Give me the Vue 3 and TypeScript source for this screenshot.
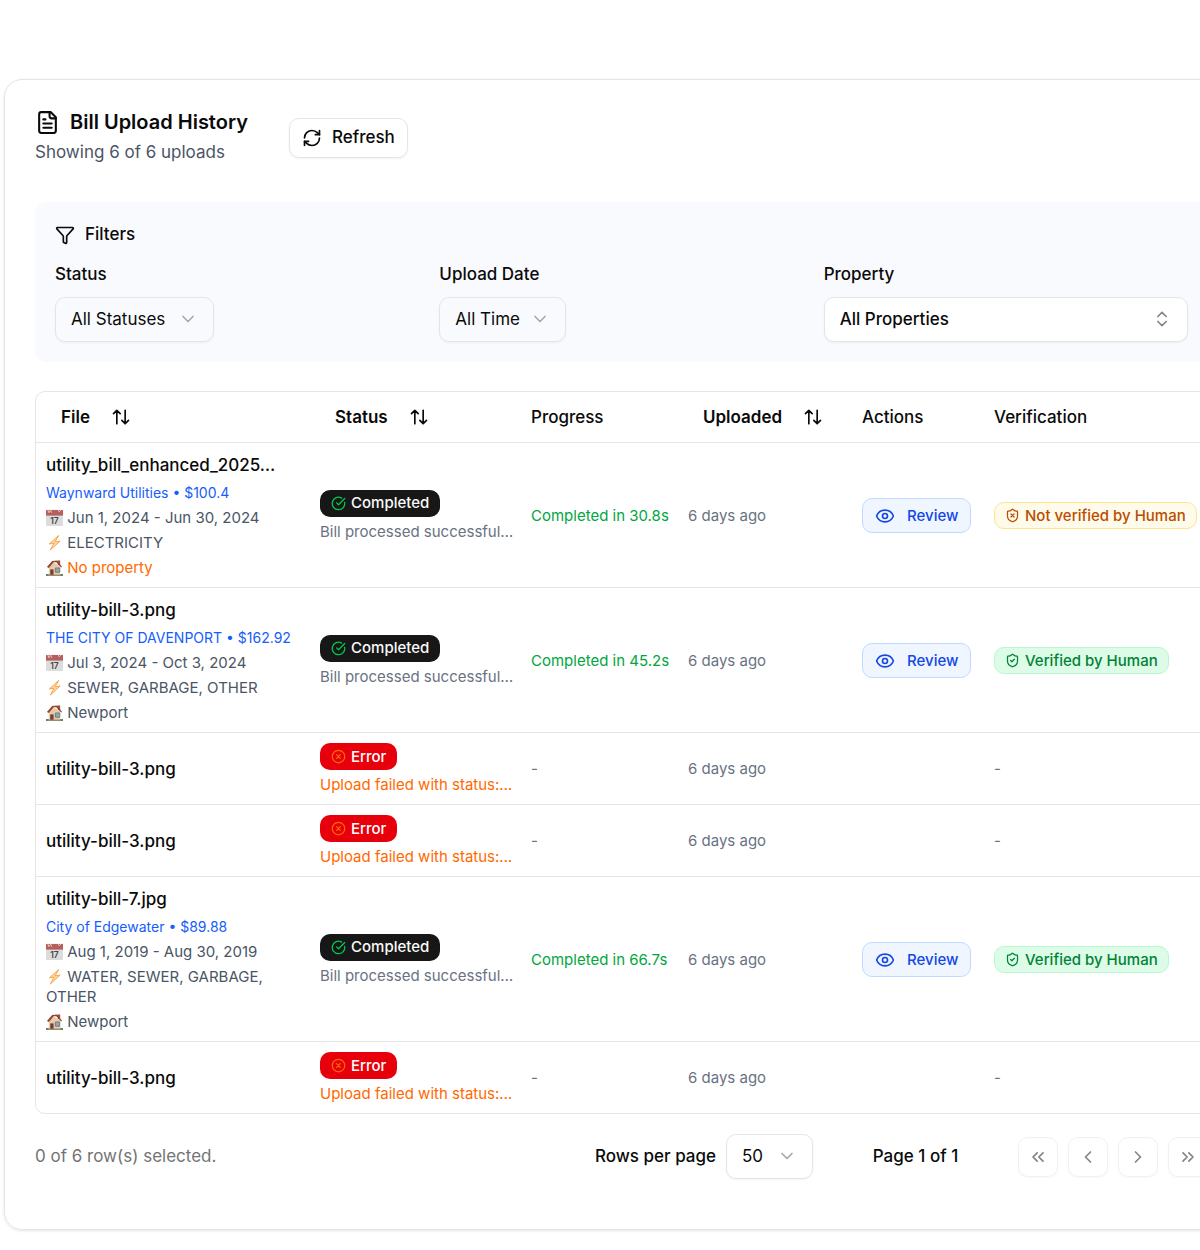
<script setup lang="ts">
import { ref } from 'vue'

type Verification = 'verified' | 'unverified' | null

interface Upload {
  id: number
  file: string
  bill?: string
  period?: string
  services?: string
  property?: string
  ok: boolean
  message: string
  progress: string
  uploaded: string
  verification: Verification
}

const success = 'Bill processed successful…'
const failure = 'Upload failed with status:…'

const failed = (id: number): Upload => ({
  id,
  file: 'utility-bill-3.png',
  ok: false,
  message: failure,
  progress: '-',
  uploaded: '6 days ago',
  verification: null,
})

const uploads: Upload[] = [
  {
    id: 1,
    file: 'utility_bill_enhanced_2025…',
    bill: 'Waynward Utilities • $100.4',
    period: 'Jun 1, 2024 - Jun 30, 2024',
    services: 'ELECTRICITY',
    ok: true,
    message: success,
    progress: 'Completed in 30.8s',
    uploaded: '6 days ago',
    verification: 'unverified',
  },
  {
    id: 2,
    file: 'utility-bill-3.png',
    bill: 'THE CITY OF DAVENPORT • $162.92',
    period: 'Jul 3, 2024 - Oct 3, 2024',
    services: 'SEWER, GARBAGE, OTHER',
    property: 'Newport',
    ok: true,
    message: success,
    progress: 'Completed in 45.2s',
    uploaded: '6 days ago',
    verification: 'verified',
  },
  failed(3),
  failed(4),
  {
    id: 5,
    file: 'utility-bill-7.jpg',
    bill: 'City of Edgewater • $89.88',
    period: 'Aug 1, 2019 - Aug 30, 2019',
    services: 'WATER, SEWER, GARBAGE, OTHER',
    property: 'Newport',
    ok: true,
    message: success,
    progress: 'Completed in 66.7s',
    uploaded: '6 days ago',
    verification: 'verified',
  },
  failed(6),
]

const columns = [
  { key: 'file', label: 'File', sortable: true },
  { key: 'status', label: 'Status', sortable: true },
  { key: 'progress', label: 'Progress', sortable: false },
  { key: 'uploaded', label: 'Uploaded', sortable: true },
  { key: 'actions', label: 'Actions', sortable: false },
  { key: 'verification', label: 'Verification', sortable: false },
]

const pagers = [
  { label: 'First page', d: 'm11 17-5-5 5-5M18 17l-5-5 5-5' },
  { label: 'Previous page', d: 'm15 18-6-6 6-6' },
  { label: 'Next page', d: 'm9 18 6-6-6-6' },
  { label: 'Last page', d: 'm6 17 5-5-5-5M13 17l5-5-5-5' },
]

const shield =
  'M20 13c0 5-3.5 7.5-7.66 8.95a1 1 0 0 1-.67-.01C7.5 20.5 4 18 4 13V6a1 1 0 0 1 1-1c2 0 4.5-1.2 6.24-2.72a1.17 1.17 0 0 1 1.52 0C14.51 3.81 17 5 19 5a1 1 0 0 1 1 1z'

const status = ref('All Statuses')
const date = ref('All Time')
const property = ref('All Properties')
const pageSize = ref('50')
</script>

<template>
  <main class="page">
    <section class="card">
      <header class="head">
        <div class="head-text">
          <h1 class="title">
            <svg class="icon icon-lg" viewBox="0 0 24 24" aria-hidden="true">
              <path d="M15 2H6a2 2 0 0 0-2 2v16a2 2 0 0 0 2 2h12a2 2 0 0 0 2-2V7Z" />
              <path d="M14 2v4a2 2 0 0 0 2 2h4M10 9H8M16 13H8M16 17H8" />
            </svg>
            Bill Upload History
          </h1>
          <p class="subtitle">Showing 6 of 6 uploads</p>
        </div>
        <button type="button" class="refresh">
          <svg class="icon" viewBox="0 0 24 24" aria-hidden="true">
            <path d="M3 12a9 9 0 0 1 9-9 9.75 9.75 0 0 1 6.74 2.74L21 8" />
            <path d="M21 3v5h-5M21 12a9 9 0 0 1-9 9 9.75 9.75 0 0 1-6.74-2.74L3 16" />
            <path d="M8 16H3v5" />
          </svg>
          Refresh
        </button>
      </header>

      <section class="filters">
        <h2 class="filters-title">
          <svg class="icon" viewBox="0 0 24 24" aria-hidden="true">
            <path
              d="M10 20a1 1 0 0 0 .553.895l2 1A1 1 0 0 0 14 21v-7a2 2 0 0 1 .517-1.341L21.74 4.67A1 1 0 0 0 21 3H3a1 1 0 0 0-.742 1.67l7.225 7.989A2 2 0 0 1 10 14z"
            />
          </svg>
          Filters
        </h2>
        <div class="filter-grid">
          <div class="field">
            <label for="status">Status</label>
            <div class="select select-status">
              <select id="status" v-model="status">
                <option>All Statuses</option>
                <option>Completed</option>
                <option>Error</option>
              </select>
              <svg class="icon chevron" viewBox="0 0 24 24" aria-hidden="true"><path d="m6 9 6 6 6-6" /></svg>
            </div>
          </div>
          <div class="field">
            <label for="date">Upload Date</label>
            <div class="select select-date">
              <select id="date" v-model="date">
                <option>All Time</option>
                <option>Today</option>
              </select>
              <svg class="icon chevron" viewBox="0 0 24 24" aria-hidden="true"><path d="m6 9 6 6 6-6" /></svg>
            </div>
          </div>
          <div class="field">
            <label for="property">Property</label>
            <div class="select select-property">
              <select id="property" v-model="property">
                <option>All Properties</option>
                <option>Newport</option>
              </select>
              <svg class="icon chevron" viewBox="0 0 24 24" aria-hidden="true">
                <path d="m7 15 5 5 5-5M7 9l5-5 5 5" />
              </svg>
            </div>
          </div>
        </div>
      </section>

      <div class="table-box">
        <table>
          <colgroup>
            <col v-for="c in columns" :key="c.key" :class="'col-' + c.key" />
          </colgroup>
          <thead>
            <tr>
              <th v-for="c in columns" :key="c.key" scope="col">
                <button v-if="c.sortable" type="button" class="sort">
                  {{ c.label }}
                  <svg class="icon" viewBox="0 0 24 24" aria-hidden="true">
                    <path d="m21 16-4 4-4-4M17 20V4M3 8l4-4 4 4M7 4v16" />
                  </svg>
                </button>
                <template v-else>{{ c.label }}</template>
              </th>
            </tr>
          </thead>
          <tbody>
            <tr v-for="u in uploads" :key="u.id">
              <td>
                <div class="file">
                  <div class="file-name">{{ u.file }}</div>
                  <template v-if="u.bill">
                    <div class="bill">{{ u.bill }}</div>
                    <div>
                      <svg class="emoji" viewBox="0 0 18 18" aria-hidden="true">
                        <rect x="0" y="1" width="18" height="17" rx="1" fill="#dcdcdc" />
                        <path d="M0 1h18v6H0z" fill="#b4605e" />
                        <path d="M2 1l1 3 2-3 1 3M13 1l1 2 2-2" stroke="#e5c9bd" fill="none" />
                        <text x="9" y="16" text-anchor="middle" class="day">17</text>
                      </svg>
                      {{ u.period }}
                    </div>
                    <div>
                      <svg class="emoji" viewBox="0 0 18 18" aria-hidden="true">
                        <path
                          d="M13.5 1.5 3.5 10.5l5 -.8L4.5 17l10.500-9.500-5.500.8z"
                          fill="#ffd9a0"
                          stroke="#f7a24b"
                          stroke-linejoin="round"
                        />
                      </svg>
                      {{ u.services }}
                    </div>
                    <div :class="{ missing: !u.property }">
                      <svg class="emoji" viewBox="0 0 18 18" aria-hidden="true">
                        <path d="M12.500 1.500h2.500v5h-2.500z" fill="#a4533d" />
                        <path d="M3 8 7 3l8 5v9H3z" fill="#e9c9a6" />
                        <path d="M1 8.500 6.500 2 12 1.500 17 8.500l-1 .5-5-5.500L8 3.500 3 9.500z" fill="#8e4636" />
                        <path d="M4.500 11h3.500v6H4.500z" fill="#6d4038" />
                        <path d="M10 9.500h4.500V14H10z" fill="#6fb1d6" stroke="#8a7468" />
                        <path d="M0 16h3v2H0zM15 16h3v2h-3z" fill="#5c8a58" />
                        <path d="M3 16.500h12V18H3z" fill="#9c8779" />
                      </svg>
                      {{ u.property ?? 'No property' }}
                    </div>
                  </template>
                </div>
              </td>
              <td>
                <div class="status">
                  <span class="badge" :class="u.ok ? 'badge-done' : 'badge-error'">
                    <svg class="icon icon-sm" viewBox="0 0 24 24" aria-hidden="true">
                      <path v-if="u.ok" d="M21.801 10A10 10 0 1 1 17 3.335M9 11l3 3L22 4" />
                      <template v-else>
                        <circle cx="12" cy="12" r="10" />
                        <path d="m15 9-6 6M9 9l6 6" />
                      </template>
                    </svg>
                    {{ u.ok ? 'Completed' : 'Error' }}
                  </span>
                  <span class="message" :class="{ failed: !u.ok }">{{ u.message }}</span>
                </div>
              </td>
              <td :class="u.ok ? 'done' : 'muted'">{{ u.progress }}</td>
              <td class="muted">{{ u.uploaded }}</td>
              <td>
                <button v-if="u.ok" type="button" class="review">
                  <svg class="icon" viewBox="0 0 24 24" aria-hidden="true">
                    <path
                      d="M2.062 12.348a1 1 0 0 1 0-.696 10.75 10.75 0 0 1 19.876 0 1 1 0 0 1 0 .696 10.75 10.75 0 0 1-19.876 0"
                    />
                    <circle cx="12" cy="12" r="3" />
                  </svg>
                  Review
                </button>
              </td>
              <td class="muted">
                <span v-if="u.verification" class="badge" :class="'badge-' + u.verification">
                  <svg class="icon icon-sm" viewBox="0 0 24 24" aria-hidden="true">
                    <path :d="shield" />
                    <path :d="u.verification === 'verified' ? 'm9 12 2 2 4-4' : 'm14.5 9.500-5 5M9.500 9.500l5 5'" />
                  </svg>
                  {{ u.verification === 'verified' ? 'Verified by Human' : 'Not verified by Human' }}
                </span>
                <template v-else>-</template>
              </td>
            </tr>
          </tbody>
        </table>
      </div>

      <footer class="foot">
        <p class="selected">0 of 6 row(s) selected.</p>
        <div class="page-size">
          <label for="page-size">Rows per page</label>
          <div class="select select-size">
            <select id="page-size" v-model="pageSize">
              <option>10</option>
              <option>50</option>
            </select>
            <svg class="icon chevron" viewBox="0 0 24 24" aria-hidden="true"><path d="m6 9 6 6 6-6" /></svg>
          </div>
        </div>
        <p class="page-no">Page 1 of 1</p>
        <nav class="pager" aria-label="Pagination">
          <button v-for="p in pagers" :key="p.label" type="button" disabled :aria-label="p.label">
            <svg class="icon" viewBox="0 0 24 24" aria-hidden="true"><path :d="p.d" /></svg>
          </button>
        </nav>
      </footer>
    </section>
  </main>
</template>

<style>
body {
  margin: 0;
  background: #fff;
}
</style>

<style scoped>
.page {
  overflow: hidden;
  padding: 79px 0 20px 4px;
  color: #0a0a0a;
  font-family: Inter, 'Liberation Sans', sans-serif;
  font-size: 17px;
  line-height: 25px;
}

.page *,
.page {
  box-sizing: border-box;
}

/* The card is wider than the window and runs off its right edge. */
.card {
  width: calc(100% + 39px);
  padding: 30px 30px 50px;
  border: 1px solid #e5e5e5;
  border-radius: 18px;
  box-shadow: 0 1px 3px rgba(0, 0, 0, 0.1);
}

h1,
h2,
p {
  margin: 0;
}

button,
select {
  font: inherit;
  color: inherit;
  margin: 0;
}

.icon {
  flex: none;
  width: 20px;
  height: 20px;
  fill: none;
  stroke: currentColor;
  stroke-width: 2;
  stroke-linecap: round;
  stroke-linejoin: round;
}

.icon-lg {
  width: 25px;
  height: 25px;
}

.icon-sm {
  width: 15px;
  height: 15px;
}

.head {
  display: flex;
  align-items: center;
  gap: 40px;
}

.head-text {
  display: flex;
  flex-direction: column;
  gap: 5px;
  min-width: 214px;
}

.title {
  display: flex;
  align-items: center;
  gap: 10px;
  font-size: 20px;
  font-weight: 600;
  line-height: 25px;
}

.subtitle {
  color: #4a5565;
}

.refresh {
  display: flex;
  align-items: center;
  gap: 10px;
  height: 40px;
  padding: 0 12px;
  border: 1px solid #e5e5e5;
  border-radius: 10px;
  background: #fff;
  font-weight: 500;
  box-shadow: 0 1px 2px rgba(0, 0, 0, 0.05);
}

.filters {
  margin-top: 37px;
  padding: 20px;
  border-radius: 12px;
  background: #f9fafe;
}

.filters-title {
  display: flex;
  align-items: center;
  gap: 10px;
  font-size: 17px;
  font-weight: 500;
}

.filter-grid {
  display: grid;
  grid-template-columns: repeat(3, 1fr);
  gap: 20px;
  margin-top: 15px;
}

.field {
  display: flex;
  flex-direction: column;
  gap: 10px;
  font-weight: 500;
}

.select {
  position: relative;
  height: 45px;
  font-weight: 400;
}

.select select {
  width: 100%;
  height: 100%;
  padding: 0 15px;
  border: 1px solid #e5e5e5;
  border-radius: 10px;
  background: transparent;
  appearance: none;
  box-shadow: 0 1px 2px rgba(0, 0, 0, 0.05);
}

.chevron {
  position: absolute;
  top: 12px;
  right: 16px;
  color: #a8a8a8;
  pointer-events: none;
}

.select-status {
  width: 159px;
}

.select-date {
  width: 127px;
}

.select-size {
  width: 87px;
}

.select-property {
  font-weight: 500;
}

.select-property select {
  background: #fff;
}

.select-property .chevron {
  color: #858585;
}

.table-box {
  margin-top: 29px;
  overflow: hidden;
  border: 1px solid #e5e5e5;
  border-radius: 10px;
}

table {
  width: 100%;
  table-layout: fixed;
  border-collapse: separate;
  border-spacing: 0;
}

.col-file {
  width: 274px;
}

.col-status {
  width: 211px;
}

.col-progress {
  width: 157px;
}

.col-uploaded {
  width: 174px;
}

.col-actions {
  width: 132px;
}

th {
  height: 51px;
  padding: 0 10px;
  border-bottom: 1px solid #e5e5e5;
  text-align: left;
  font-weight: 500;
}

.sort {
  display: flex;
  align-items: center;
  gap: 21px;
  padding: 0 15px;
  border: 0;
  background: none;
  font-weight: 600;
}

td {
  padding: 10px 10px 9px;
  border-bottom: 1px solid #e5e5e5;
  vertical-align: middle;
  font-size: 15px;
  line-height: 20px;
  white-space: nowrap;
}

tbody tr:last-child td {
  border-bottom: 0;
}

.file {
  display: flex;
  flex-direction: column;
  gap: 5px;
  max-width: 250px;
  color: #4a5565;
  white-space: normal;
}

.file-name {
  color: #0a0a0a;
  font-size: 17px;
  font-weight: 500;
  line-height: 25px;
  white-space: nowrap;
}

.bill {
  color: #155dfc;
  font-size: 14px;
  white-space: nowrap;
}

.missing {
  color: #ff6900;
}

.emoji {
  width: 17px;
  height: 17px;
  vertical-align: -3px;
}

.day {
  fill: #444;
  font-size: 9px;
  font-weight: 600;
}

.status {
  display: flex;
  flex-direction: column;
  align-items: flex-start;
  gap: 5px;
}

.badge {
  display: inline-flex;
  align-items: center;
  gap: 5px;
  height: 27px;
  padding: 0 10px;
  border: 1px solid transparent;
  border-radius: 10px;
  font-weight: 500;
  vertical-align: middle;
}

.badge-done {
  background: #171717;
  color: #fafafa;
}

.badge-done .icon {
  color: #00c950;
}

.badge-error {
  background: #e7000b;
  color: #fff;
}

.badge-error .icon {
  color: #ff6900;
}

.badge-verified {
  border-color: #b9f8cf;
  background: #dcfce7;
  color: #008236;
}

.badge-unverified {
  border-color: #fee685;
  background: #fffbeb;
  color: #bb4d00;
}

.message,
.muted {
  color: #6a7282;
}

.failed {
  color: #ff6900;
}

.done {
  color: #00a63e;
}

.review {
  display: flex;
  align-items: center;
  gap: 12px;
  height: 35px;
  padding: 0 12px;
  border: 1px solid #bedbff;
  border-radius: 10px;
  background: #eff6ff;
  color: #1447e6;
  font-weight: 500;
}

.foot {
  display: flex;
  align-items: center;
  gap: 40px;
  margin-top: 20px;
}

.selected {
  flex: 1;
  color: #737373;
}

.page-size {
  display: flex;
  align-items: center;
  gap: 10px;
  font-weight: 500;
}

.page-no {
  width: 125px;
  text-align: center;
  font-weight: 500;
}

.pager {
  display: flex;
  gap: 10px;
}

.pager button {
  display: flex;
  align-items: center;
  justify-content: center;
  width: 40px;
  height: 40px;
  padding: 0;
  border: 1px solid #e5e5e5;
  border-radius: 10px;
  background: #fff;
  box-shadow: 0 1px 2px rgba(0, 0, 0, 0.05);
  opacity: 0.5;
}
</style>
